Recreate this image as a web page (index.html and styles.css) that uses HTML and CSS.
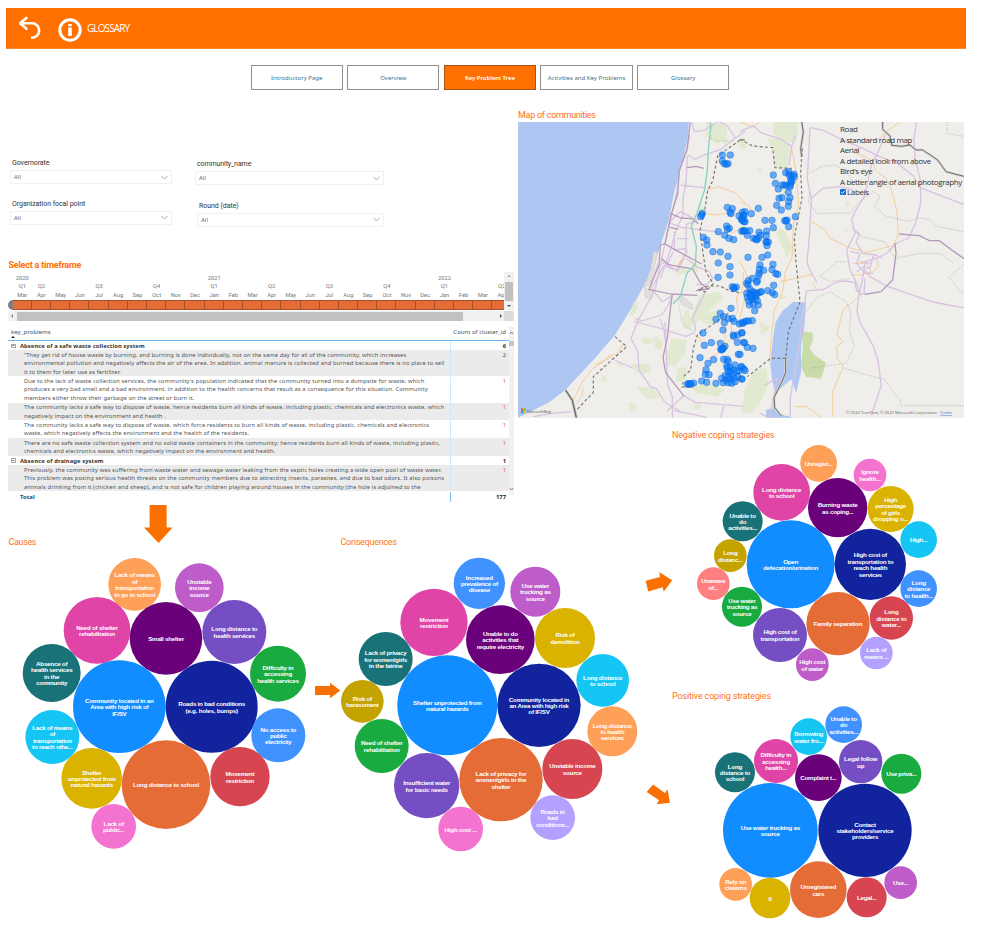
FILE: index.html
```html
<!DOCTYPE html>
<html lang="en">
<head>
<meta charset="utf-8">
<title>Key Problem Tree</title>
<link rel="stylesheet" href="styles.css">
</head>
<body>
<header class="topbar">
  <svg class="back" viewBox="0 0 22 24" width="22" height="24"><path d="M8.2 1.2 1.2 7.3 8.2 13.4M1.5 7.3H13a6.7 6.7 0 0 1 0 14.4h-1" fill="none" stroke="#fff" stroke-width="2.6"/></svg>
  <svg class="info" viewBox="0 0 24 24" width="24" height="24"><circle cx="12" cy="12" r="10.200" fill="none" stroke="#fff" stroke-width="3"/><path d="M10.200 6h3.600v2.300h-3.600zM10.200 9.500h3.600V18h-3.600z" fill="#fff"/></svg>
  <span class="topbar-title">GLOSSARY</span>
</header>
<nav class="tabs">
  <a class="tab">Introductory Page</a>
  <a class="tab">Overview</a>
  <a class="tab active">Key Problem Tree</a>
  <a class="tab">Activities and Key Problems</a>
  <a class="tab">Glossary</a>
</nav>
<main class="board">
  <section class="problems">
    <div class="filters">
      <div class="filter"><label>Governorate</label><div class="select">All<svg viewBox="0 0 7 5" width="7" height="5"><path d="M.5.8 3.500 4 6.500.8"/></svg></div></div>
      <div class="filter f2"><label>community_name</label><div class="select">All<svg viewBox="0 0 7 5" width="7" height="5"><path d="M.5.8 3.500 4 6.500.8"/></svg></div></div>
      <div class="filter"><label>Organization focal point</label><div class="select">All<svg viewBox="0 0 7 5" width="7" height="5"><path d="M.5.8 3.500 4 6.500.8"/></svg></div></div>
      <div class="filter f4"><label>Round (date)</label><div class="select">All<svg viewBox="0 0 7 5" width="7" height="5"><path d="M.5.8 3.500 4 6.500.8"/></svg></div></div>
    </div>
    <h2 class="title strong">Select a timeframe</h2>
    <div class="timeline">
      <div class="tl-view">
        <div class="tl-row" id="years"></div>
        <div class="tl-row" id="quarters"></div>
        <div class="tl-row" id="months"></div>
        <div class="tl-bar"><i class="handle"></i><div class="cells" id="cells"></div></div>
      </div>
      <div class="vscroll"><i class="up"></i><b></b><i class="down"></i></div>
      <div class="hscroll"><i class="left"></i><b></b><i class="right"></i></div>
      <div class="corner"></div>
    </div>
    <div class="table">
      <div class="grid-body">
        <div class="row head"><span>key_problems<i class="sort"></i></span><em>Count of cluster_id</em></div>
        <div class="row group"><span><i class="box"></i>Absence of a safe waste collection system</span><em>6</em></div>
        <div class="row odd h3"><span>“They get rid of house waste by burning, and burning is done individually, not on the same day for all of the community, which increases<br>environmental pollution and negatively affects the air of the area. In addition, animal manure is collected and burned because there is no place to sell<br>it to them for later use as fertilizer.</span><em>2</em></div>
        <div class="row h3"><span>Due to the lack of waste collection services, the community's population indicated that the community turned into a dumpsite for waste, which<br>produces a very bad smell and a bad environment, in addition to the health concerns that result as a consequence for this situation. Community<br>members either throw their garbage on the street or burn it.</span><em class="o">1</em></div>
        <div class="row odd h2"><span>The community lacks a safe way to dispose of waste, hence residents burn all kinds of waste, including plastic, chemicals and electronics waste, which<br>negatively impact on the environment and health .</span><em class="o">1</em></div>
        <div class="row h2 tall"><span>The community lacks a safe way to dispose of waste, which force residents to burn all kinds of waste, including plastic, chemicals and electronics<br>waste, which negatively affects the environment and the health of the residents.</span><em class="o">1</em></div>
        <div class="row odd h2"><span>There are no safe waste collection system and no solid waste containers in the community; hence residents burn all kinds of waste, including plastic,<br>chemicals and electronics waste, which negatively impact on the environment and health.</span><em class="o">1</em></div>
        <div class="row group"><span><i class="box"></i>Absence of drainage system</span><em>1</em></div>
        <div class="row odd h3"><span>Previously, the community was suffering from waste water and sewage water leaking from the septic holes creating a wide open pool of waste water.<br>This problem was posing serious health threats on the community members due to attracting insects, parasites, and due to bad odors. It also poisons<br>animals drinking from it (chicken and sheep), and is not safe for children playing around houses in the community (the hole is adjoined to the</span><em class="o">1</em></div>
        <div class="row total"><span>Total</span><em>177</em></div>
      </div>
      <div class="tscroll"><svg viewBox="0 0 5 4" width="5" height="4"><path d="M.8 3 2.500 1 4.200 3"/></svg><b></b><svg class="dn" viewBox="0 0 5 4" width="5" height="4"><path d="M.8 1 2.500 3 4.200 1"/></svg></div>
    </div>
  </section>

  <section class="communities">
    <h2 class="title">Map of communities</h2>
    <div class="map">
      <svg viewBox="518 122 446 296" width="446" height="296">
        <rect x="518" y="122" width="446" height="296" fill="#efeeea"/>
        <g transform="translate(515 105) scale(.33333)">
          <path fill="#adc6f2" d="M9 51H522L518 100 500 180 478 260 460 350 440 410 420 470 385 545 355 600 300 690 235 765 150 856 100 893 9 938Z"/>
          <g fill="#dbe8c4" opacity=".7">
            <path d="M575 51l55 8 8 30-30 32-35-28zM660 115l30-12v25zM620 90l20 15-12 18zM500 230l20 10-8 14zM553 300l14 10-8 22-12-4zM355 590l15 5-8 28-20 12zM555 570l60-10 10 20-35 32-50 45-10-25zM630 640l-50 20-35-20 60-24zM500 640l15-30 20 40-8 25-22-5zM470 700l45 5-5 40-30 40-30-8 8-40zM490 790l25-5-4 40-30 5zM520 842l70-6 40 20-25 20-60-12zM340 780l60-5 10 25-30 10zM365 845l50 5 20 30-40 2zM260 810l18 12-15 8zM340 890l25 10-6 18-15-2zM540 895l20 2-8 20-14-4zM475 495l30-10 20 12-30 14zM525 470l20 5 6 25-16 5zM420 690l24 20-5 24-20-7zM380 700l40-2-4 15-30 6zM300 772l30 3-14 12z"/>
          </g>
          <g fill="#e0dfdb" stroke="#c8c7c3" stroke-width="1.500"><path d="M428 440l-12 55 -12 42-18 12 20-54 10-54zM390 550l25 10-5 24-20-9zM497 570l35 28v15l-30-13-10-18z"/></g>
          <g fill="none" stroke="#d9c2e2" stroke-width="3.800" stroke-linejoin="round">
            <path d="M530 52l8 28 30-4 38-24M524 90l-8 48-22 50-8 70-14 65-24 100-8 42-20 90-50 90-22 55 20 40 4 55 34 50 18 6 25 40 50 30"/>
            <path d="M517 153l-4 80-8 40-2 60-18 38-14 50-35 100M519 150l20 13 32-14 45-15 45-35-25-38-24-10M661 99l30-20M497 241l70 7M466 348l30-28 52 26-34 12-2 90-24 50-34-13 20-45M460 352l40 15 120 16M478 380v55l38-5M486 401h34M438 470l45 25 35-60M405 545l25-70M410 550l40-75M515 460l30 25 38 15 10 20-20 20-30-2M360 640l20 8 60-18 20-30 10-28-28 18-32-38M357 649l75 20 80 25 25-10 5-15-10-30 30-60 10-22M435 640l12 35 5 40M300 765l52 24M450 650l4 100 4 90 14 35 0 63M506 872l-50 47M506 872l35 20 145 12M627 900l-10 38M470 915l50 10 55 12M55 935l55-10 60-5"/>
          </g>
          <g fill="none" stroke="#b599bd" stroke-width="3.800" stroke-linejoin="round">
            <path d="M526 52l-10 80-23 65-5 70-20 62-18 87-14 4-4 60-30 73 65 14 80 4M516 188l28-4 22 6M466 325l32 14 32 2 20 15M464 367l26 6M450 417l35 20 75 40M438 460l25 20 70 12 22 40 22 20-35 5M472 568l-8 60-6 65-14 65 8 45 54 69"/>
          </g>
          <path d="M585 52l3 12-8 70-3 60-8 60-23 70-17 40 15 60-3 55-25 25-20 70-22 22" fill="none" stroke="#86d2c2" stroke-width="4"/>
          <g fill="none" stroke="#f4c88b" stroke-width="2.600"><path d="M575 255l35-10 50 18 30 30M570 325l30 5 30-4M508 460l-18 22 8-18M325 715l-20 35-20 0-20 20-32 20-30 40-28 55M290 755l-50 25M205 850l-5 25-15 20M686 500l-4 55-18 20 5 40-20 40 2 40-35 45-35 20M540 690l16 10 1 12M686 325l-28-2M650 385l40-20M630 660l0 80M690 580l-16 60"/></g>
          <g fill="none" stroke="#777673" stroke-width="3.500" stroke-dasharray="9 7"><path d="M690 105l-12-2-70 50-15 75-15 28-8 55-15 65 10 75 8 50 22 35-25 25-20-8 30-10 35 0 30 15 35 6M640 625l-28 20-65 45-12 40-8 65-22 20M505 830l-4 16 30-1M300 695l35 30-100 90 0 47-50 53"/></g>
          <path d="M583 98l25 10 50 0M490 590l10 60 35 30" fill="none" stroke="#9a9996" stroke-width="1.500" stroke-dasharray="3 3"/>
          <path d="M152 856l20 30 12 52" fill="none" stroke="#bcbbb8" stroke-width="8"/><path d="M152 856l20 30 12 52" fill="none" stroke="#444" stroke-width="2.500"/>
        </g>
        <g transform="translate(740 105) scale(.33333)">
          <g fill="#dbe8c4" opacity=".7"><path d="M100 51l75 0-6 60-35 0-35-25zM80 100l60 8 10 20-10 65-40-5 3-50zM110 225l40 12-6 30-20-5zM50 185l20 12-10 4zM100 370l30 4 30 50-20 35-22-55zM120 570l20 5-12 10zM60 650l34 18-30 22zM40 800l40-12 5 52-25 55-30 30-25 0 10-70zM0 120l20 6-20 8zM315 285l15 10-10 10zM313 370l15 8-10 8z"/></g>
          <path fill="#c9dca8" d="M186 678l32 5v25l-10 22 15 20 35 24-15 48-20-4-25-2-15-30 5-55z"/>
          <path fill="#adc6f2" d="M160 590l38 3-5 70-10 55 0 85-15 60-14-40-18 15-30 25-9-35-6-50 5-55 10-70 22-36zM78 915l30-8 25 22 28 9H78z"/>
          <path d="M160 835l-20 25-15 15-20 42 30 15 35-2-8-45z" fill="#efeeea"/>
          <g fill="none" stroke="#f4c88b" stroke-width="2.600">
            <path d="M0 290l30 15 0 10M60 51l-20 15-40-15M168 200l8 100-15 50-5 110-20 40-8 60-25 55-10 90-5 70M155 130l15 80M120 530l100-22M135 385l20-20M215 350l40 25 15 25 60 28 50 14 80-20 15-35-4-70-15-55-15-40-35-25-8-30-55-25M480 51l-50 35-20 25M340 475l40 0 15 25-30 10-30 0M410 460l5 25-15 15M365 568l-55 45-20 75 20 22-20 15 2 35 18 25-32 75 0 76M165 905l35 0 45 33M220 535l10 20M0 470l30 60-10 60"/>
          </g>
          <g fill="none" stroke="#d9c2e2" stroke-width="4" stroke-linejoin="round">
            <path d="M40 62l25 22 55 18 35 22 12-35M0 80l40-18M155 125l-8 55M210 68l40 8 50 25 75 32 50 25 45 15 50 40 20 35 131 50M530 51l-8 50 3 60 15 60 3 70-15 60-22 48-35 15-30 30-30 15-35 10-10 60-10 45-5 42 8 35 40 70 15 45 10 75-30 90M440 80l-30 70-15 25-20 95-30 50-10 25 10 40-25 50 10 60 20 40 10 35M210 68l-5 95-3 60 12 60-5 100-8 90 10 25 20 35M214 280l35-30 50-5 40 10M370 568l-20-10-5-25-30-5-25 3-40 22-50 5-15 80-5 60-10 70-14 80-5 35 0 50M370 490l20 25 50 28 80 28 60 20 60 12 31 5M375 520l-3 45M338 370l20 20-10 20 20 35 40 5 20 10M350 500l20-15 20 5 10-40M330 440l30 5-10 30 25 30 25 0M360 470l35 5M75 840l35-20-20 120-30-15"/>
          </g>
          <g fill="none" stroke="#b599bd" stroke-width="4"><path d="M478 387l60 5 30 15 30 0 40 30 34 24M465 415l3 30-10 80-35 35-50 8"/></g>
          <g fill="none" stroke="#aaa9a6" stroke-width="2" stroke-dasharray="4 4"><path d="M208 205l35-20 40-5 40 20 15 30M210 260l-5 30 25 35 100-1 25-30 45-35 20 15-18 30 38 30 65 15 35-10 30 5 20 20 75 15 31 0M350 375l15 20 70 15 30 50 75-15 60 0 40 30M672 480l-46 36 46 54M320 470l-30 0-50 45 30 15 60-10M198 620l30-40 40-20 50 30 15 35-5 50 15 50-25 50-110 15M315 790l50 15 70 20 45 60 5 17 187 0M622 51v35l50 8"/></g>
          <path d="M428 51v22l22 20 5 28 30 3 25-4 18 15 20 0 45 30 25 35 30 8 24 6M185 51l5 30-8 50 3 25M137 758l0 45-10 25-25 50 2 30 20 25" fill="none" stroke="#d6d5d2" stroke-width="8"/>
          <path d="M428 51v22l22 20 5 28 30 3 25-4 18 15 20 0 45 30 25 35 30 8 24 6M185 51l5 30-8 50 3 25M137 758l0 45-10 25-25 50 2 30 20 25" fill="none" stroke="#555" stroke-width="2.500"/>
          <path d="M0 103l38 20 60 5 7 60 50 2M187 130l-5 70 4 80-18 90-5 30 5 70 12 120-35 90-8 80-45 0-70 55" fill="none" stroke="#777673" stroke-width="3.500" stroke-dasharray="9 7"/>
        </g>
        <g id="dots"></g>
        <g class="bing"><path fill="#f25022" d="M521 408.500h2.200v2.200H521z"/><path fill="#7fba00" d="M523.500 408.500h2.200v2.200h-2.200z"/><path fill="#00a4ef" d="M521 411h2.200v2.200H521z"/><path fill="#ffb900" d="M523.500 411h2.200v2.200h-2.200z"/><text x="527" y="412.500" textLength="24">Microsoft Bing</text><text x="846" y="414" textLength="91">© 2022 TomTom, © 2022 Microsoft Corporation</text><text class="terms" x="940" y="414" textLength="12">Terms</text></g>
      </svg>
      <div class="map-types">
        <p>Road</p><p>A standard road map</p><p>Aerial</p><p>A detailed look from above</p><p>Bird's eye</p><p>A better angle of aerial photography</p>
        <p class="labels"><svg viewBox="0 0 6 6" width="6" height="6"><rect width="6" height="6" rx="1" fill="#0b6fe0"/><path d="M1.200 3.100 2.500 4.400 4.900 1.600" fill="none" stroke="#fff"/></svg>Labels</p>
      </div>
    </div>
  </section>

  <section class="tree">
    <svg viewBox="0 503 672 433" width="672" height="433">
      <g fill="#fa7000"><path d="M149.600 505h17v22.500h6L158.500 543 144 527.500h5.600z"/><path d="M315 686h15v-3.300l10.300 7.800L330 698.300V695H315z"/><path d="M645.700 580.700 660 577l-.8-5 13 8.300-8.500 11.500-1-4.500-14.500 4.200z"/><path d="M653 784.500l12 8.600 2.500-3.900 2.500 13.500-13.300 1.500 2.300-4-12.300-8.200z"/></g>
      <text class="svg-title" x="8.500" y="545" textLength="28">Causes</text>
      <text class="svg-title" x="340.500" y="545" textLength="56.500">Consequences</text>
      <g id="causes"></g><g id="consequences"></g>
    </svg>
  </section>
  <section class="negative">
    <h2 class="title">Negative coping strategies</h2>
    <svg viewBox="672 441 292 249" width="292" height="249"><g id="negative"></g></svg>
  </section>
  <section class="positive">
    <h2 class="title">Positive coping strategies</h2>
    <svg viewBox="672 702 292 234" width="292" height="234"><g id="positive"></g></svg>
  </section>
</main>
<script src="charts.js"></script>
</body>
</html>
```
FILE: styles.css
```css
* { box-sizing: border-box; }
body { margin: 0; width: 983px; height: 936px; overflow: hidden; background: #fff; font-family: "Open Sans", "Noto Sans", sans-serif; }
svg { display: block; }

.topbar { display: flex; align-items: center; height: 41px; margin: 8px 17px 0 6px; padding-left: 13px; background: #ff7000; border-bottom: 1px solid #ff8a2e; }
.back { margin-top: -1px; }
.info { margin-left: 17px; margin-top: 3px; }
.topbar-title { margin-left: 5px; color: #fff; font-size: 10px; letter-spacing: -.9px; transform-origin: left; }

.tabs { display: flex; gap: 4.300px; margin: 16px 0 0 250.600px; height: 43px; }
.tab { width: 92.300px; height: 25px; border: 1px solid #909090; display: flex; align-items: center; justify-content: center; font: 6px "Noto Sans", sans-serif; letter-spacing: .02px; color: #3f7288; white-space: nowrap; }
.tab.active { background: #ff7000; color: #fff; border-color: #a85216; font-weight: 600; letter-spacing: -.05px; }

.board { display: grid; grid-template-columns: 518px 154px 1fr; grid-template-rows: 320px 75px 187px 246px; }
.problems { grid-area: 1 / 1 / 3 / 2; padding-left: 8px; }
.communities { grid-area: 1 / 2 / 2 / 4; }
.tree { grid-area: 3 / 1 / 5 / 3; z-index: 1; }
.negative { grid-area: 2 / 3 / 4 / 4; }
.positive { grid-area: 4 / 3 / 5 / 4; }

.title { margin: 0; height: 14px; font: 9px/14px Roboto, sans-serif; letter-spacing: -.16px; color: #ff7223; white-space: nowrap; }
.communities .title { letter-spacing: -.31px; word-spacing: .2px; }
.negative .title { height: 13px; }
.positive .title { height: 12px; line-height: 12px; }
.title.strong { font-weight: 700; color: #ff7000; height: 15px; letter-spacing: -.22px; padding-left: .5px; }

.filters { display: grid; grid-template-columns: 185px 190px; grid-template-rows: 40.500px 1fr; height: 150px; padding: 50px 0 0 2px; }
.filter { width: 162px; }
.filter label { display: block; height: 12px; padding-left: 2px; font: 7px/11px Roboto, sans-serif; color: #333; letter-spacing: -.05px; }
.f2, .f4 { width: 189px; padding-top: 1px; }
.f2 label { letter-spacing: -.1px; }
.f4 { padding: 2px 0 0 2px; }
.select { display: flex; align-items: center; justify-content: space-between; height: 14px; padding: 0 3px; border: 1px solid #f0f0f0; font: 6px "Noto Sans", sans-serif; color: #666; }
.select svg path { fill: none; stroke: #999; stroke-width: .8; }

.timeline { display: grid; grid-template-columns: 496px 10px; grid-template-rows: 39px 10px; height: 49px; margin-top: -1px; }
.tl-view { overflow: hidden; }
.tl-row { display: flex; height: 8.500px; width: 520px; padding-left: 4.700px; }
.tl-row span { flex: 0 0 19.200px; text-align: center; font: 5.800px/9px Roboto, sans-serif; color: #777; white-space: nowrap; display: flex; justify-content: center; }
.tl-row:first-child { margin-top: 1.500px; }
.tl-bar { display: flex; width: 520px; margin-top: 1px; height: 10px; }
.handle { width: 4.700px; background: #7d7d7d; border-radius: 5px 0 0 5px; }
.cells { display: flex; }
.cells i { width: 19.200px; background: #e66c37; border: 1px solid #a9502b; border-width: 1px 1px 1px 0; }
.vscroll, .hscroll { background: #f1f1f1; display: flex; align-items: center; }
.vscroll { flex-direction: column; justify-content: space-between; height: 38px; }
.vscroll b { width: 8px; height: 19px; background: #c1c1c1; }
.hscroll { justify-content: space-between; }
.hscroll b { width: 446px; height: 9px; background: #c1c1c1; margin-right: auto; margin-left: 4px; }
.corner { background: #dcdcdc; }
.up, .down, .left, .right { border: 2.500px solid transparent; }
.up { border-bottom-color: #a3a3a3; margin-top: 1px; }
.down { border-top-color: #505050; margin-bottom: 1px; }
.left { border-right-color: #888; margin-left: 1px; }
.right { border-left-color: #505050; }

.table { display: flex; margin-top: 6px; height: 174px; color: #555; font: 5.800px/8.500px "Noto Sans", sans-serif; }
.grid-body { width: 501px; }
.row { display: grid; grid-template-columns: 442px 59px; }
.row span { position: relative; padding-left: 16px; white-space: nowrap; letter-spacing: .09px; }
.row em { font-style: normal; text-align: right; padding-right: 3px; border-left: 1px solid #d4e8fa; white-space: nowrap; }
.row em.o { color: #d0683a; }
.head { height: 14px; border-bottom: 1px solid #6cb5f0; line-height: 9px; font-size: 6.100px; }
.row.head span { padding-left: 3px; color: #456; letter-spacing: 0; }
.row.head em { border: 0; color: #456; margin-left: -10px; letter-spacing: -.05px; }
.sort { position: absolute; left: 3px; top: 7px; border: 2.500px solid transparent; border-bottom-color: #222; }
.group { height: 9.200px; font-weight: 700; color: #333; line-height: 10px; }
.row.group span { padding-left: 12px; }
.box { position: absolute; left: 3px; top: 2.500px; width: 4.500px; height: 4.500px; border: .8px solid #aaa; background: linear-gradient(#888, #888) center / 2.500px 1px no-repeat; }
.odd { background: #ebebeb; }
.h3 { height: 26.300px; padding-top: .5px; }
.h2 { height: 17.300px; padding-top: .3px; }
.h2.tall { height: 18.300px; padding-top: .8px; }
.h2.tall + .h2 { height: 17.600px; }
.row.total { height: 9px; font-weight: 700; color: #222; line-height: 10px; margin-top: 1px; }
.row.total span { padding-left: 12px; color: #1c4560; }
.row.total em { border-color: #7fbdf0; }
.tscroll { width: 5px; background: #f1f1f1; height: 168px; display: flex; flex-direction: column; padding-top: 4px; }
.tscroll b { height: 5px; margin-top: 6px; background: #c4c4c4; }
.tscroll .dn { margin: auto 0 4px; }
.tscroll path { fill: none; stroke: #666; stroke-width: .8; }

.map { position: relative; width: 446px; height: 296px; overflow: hidden; }
.map-types { position: absolute; left: 322px; top: 2px; font: 8px/10.500px "Open Sans", sans-serif; color: #333; white-space: nowrap; letter-spacing: -.36px; }
.map-types p { margin: 0; }
.labels { display: flex; align-items: center; gap: 1px; }
.dot { fill: #0078ff; fill-opacity: .58; stroke: #0a58c8; stroke-opacity: .7; stroke-width: 1.500; }
.bing text { font: 4.300px "Open Sans", sans-serif; fill: #666; }
.bing .terms { fill: #3b6fd4; text-decoration: underline; }

.svg-title { font: 9px Roboto, sans-serif; fill: #ff7223; }
.bubble-label { font: 700 18.800px "Liberation Sans", Arial, sans-serif; letter-spacing: -.75px; fill: #fff; text-anchor: middle; }
```
FILE: charts.js
```js
const NS = 'http://www.w3.org/2000/svg';
function add(parent, tag, attrs, text) {
  const el = document.createElementNS(NS, tag);
  for (const k in attrs) el.setAttribute(k, attrs[k]);
  if (text) el.textContent = text;
  parent.appendChild(el);
  return el;
}

// Bubble rows: centre x, centre y, radius, colour, label lines separated by "|"
function bubbles(id, ox, oy, rows) {
  const g = document.getElementById(id);
  g.setAttribute('transform', `translate(${ox} ${oy}) scale(.33333)`);
  rows.forEach(([x, y, r, color, label]) => {
    add(g, 'circle', { cx: x, cy: y, r, fill: color });
    const lines = label.split('|');
    lines.forEach((line, i) => add(g, 'text', { class: 'bubble-label', x, y: y + 8 + (i - (lines.length - 1) / 2) * 19.2 }, line));
  });
}

bubbles('causes', 0, 500, [
  [404, 253, 79, '#ffa058', 'Lack of means|of|transportation|to go to school'],
  [598, 263, 73, '#be5dc9', 'Unstable|income|source'],
  [291, 391, 100, '#e044a7', 'Need of shelter|rehabilitation'],
  [498, 415, 109, '#6b007b', 'Small shelter'],
  [703, 396, 96, '#744ec2', 'Long distance to|health services'],
  [155, 519, 87, '#197278', 'Absence of|health services|in the|community'],
  [834, 521, 84, '#1aab40', 'Difficulty in|accessing|health services'],
  [358, 620, 139, '#118dff', 'Community located in an|Area with high risk of|IF/SV'],
  [635, 620, 138, '#12239e', 'Roads in bad conditions|(e.g. holes, bumps)'],
  [157, 711, 81, '#15c6f4', 'Lack of means|of|transportation|to reach othe...'],
  [835, 706, 81, '#4092ff', 'No access to|public|electricity'],
  [275, 835, 91, '#d9b300', 'Shelter|unprotected from|natural hazards'],
  [498, 854, 133, '#e66c37', 'Long distance to school'],
  [720, 830, 89, '#d64550', 'Movement|restriction'],
  [341, 979, 67, '#f472d0', 'Lack of|public...']
]);
bubbles('consequences', 310, 530, [
  [508, 160, 77, '#4092ff', 'Increased|prevalence of|disease'],
  [676, 185, 75, '#be5dc9', 'Use water|trucking as|source'],
  [372, 277, 101, '#e044a7', 'Movement|restriction'],
  [571, 329, 103, '#6b007b', 'Unable to do|activities that|require electricity'],
  [765, 324, 90, '#d9b300', 'Risk of|demolition'],
  [227, 387, 81, '#197278', 'Lack of privacy|for women/girls|in the latrine'],
  [157, 514, 64, '#c4a200', 'Risk of|harassment'],
  [412, 526, 150, '#118dff', 'Shelter unprotected from|natural hazards'],
  [687, 526, 125, '#12239e', 'Community located in|an Area with high risk|of IF/SV'],
  [878, 451, 79, '#15c6f4', 'Long distance|to school'],
  [907, 604, 75, '#ffa058', 'Long distance|to health|services'],
  [215, 648, 81, '#1aab40', 'Need of shelter|rehabilitation'],
  [350, 767, 98, '#744ec2', 'Insufficient water|for basic needs'],
  [573, 749, 125, '#e66c37', 'Lack of privacy for|women/girls in the|shelter'],
  [787, 717, 90, '#d64550', 'Unstable income|source'],
  [452, 897, 67, '#f472d0', 'High cost ...'],
  [728, 863, 67, '#b3a0ff', 'Roads in|bad|conditions...']
]);
bubbles('negative', 665, 425, [
  [461, 115, 55, '#ffa058', 'Unregist...'],
  [615, 150, 49, '#f472d0', 'Ignore|health...'],
  [350, 202, 85, '#e044a7', 'Long distance|to school'],
  [518, 248, 89, '#6b007b', 'Burning waste|as coping...'],
  [677, 252, 69, '#d9b300', 'High|percentage|of girls|dropping o...'],
  [233, 289, 60, '#197278', 'Unable to|do|activities...'],
  [761, 344, 55, '#15c6f4', 'High...'],
  [196, 392, 49, '#c4a200', 'Long|distanc...'],
  [377, 418, 132, '#118dff', 'Open|defecation/urination'],
  [616, 418, 107, '#12239e', 'High cost of|transportation to|reach health|services'],
  [145, 476, 49, '#ff8080', 'Unaware|of...'],
  [761, 491, 55, '#4092ff', 'Long|distance|to health...'],
  [231, 545, 60, '#1aab40', 'Use water|trucking as|source'],
  [519, 596, 95, '#e66c37', 'Family separation'],
  [679, 579, 65, '#d64550', 'Long|distance to|water...'],
  [345, 630, 81, '#744ec2', 'High cost of|transportation'],
  [634, 684, 49, '#b3a0ff', 'Lack of|means ...'],
  [442, 719, 49, '#be5dc9', 'High cost|of water']
]);
bubbles('positive', 665, 685, [
  [536, 119, 55, '#4092ff', 'Unable to|do|activities...'],
  [431, 155, 55, '#15c6f4', 'Borrowing|water fro...'],
  [333, 228, 66, '#e044a7', 'Difficulty in|accessing|health...'],
  [587, 230, 65, '#744ec2', 'Legal follow|up'],
  [210, 262, 60, '#197278', 'Long|distance to|school'],
  [709, 266, 60, '#1aab40', 'Use priva...'],
  [460, 278, 70, '#6b007b', 'Complaint t...'],
  [316, 436, 142, '#118dff', 'Use water trucking as|source'],
  [600, 436, 140, '#12239e', 'Contact|stakeholders/service|providers'],
  [212, 598, 49, '#ffa058', 'Rely on|cisterns'],
  [315, 639, 61, '#d9b300', '0'],
  [460, 614, 85, '#e66c37', 'Unregistered|cars'],
  [605, 637, 60, '#d64550', 'Legal...'],
  [707, 593, 49, '#be5dc9', 'Use...']
]);

// Community markers, one group for each map tile
const west = '622,150 646,150 622,168 628,176 639,176 634,178 562,325 560,330 557,335 637,307 652,311 645,322 648,326 672,333 682,322 686,332 680,345 687,350 635,363 643,370 637,373 610,380 629,391 680,379 686,377 642,400 656,404 565,397 575,405 576,420 594,440 616,441 639,454 610,474 645,485 645,510 609,517 652,545 658,550 664,546 656,549 648,610 616,625 603,643 625,635 640,641 628,653 652,640 657,649 673,657 684,655 624,675 564,684 656,694 668,690 681,684 568,721 589,713 616,715 630,724 625,730 620,735 617,733 622,732 686,712 670,748 555,758 596,764 579,775 626,763 637,763 640,770 573,794 571,808 582,809 660,780 680,786 635,782 645,788 655,795 640,800 630,812 650,810 665,800 672,797 620,820 632,826 645,822 658,820 668,815 680,822 640,833 650,835 660,830 625,833 603,835 560,828 575,832 536,834 518,838 525,836 520,836 528,838 648,800 640,815 637,790';
const east = '100,210 106,235 137,203 146,200 148,210 155,212 162,208 152,222 156,228 163,215 115,252 127,240 134,240 140,241 151,240 153,232 150,245 145,262 150,278 126,278 117,280 146,290 110,301 145,304 124,315 55,310 15,320 34,326 12,330 5,340 15,350 8,345 166,335 134,347 141,345 138,348 75,346 96,346 100,368 146,365 10,378 18,378 29,377 22,391 80,378 57,382 62,390 79,392 55,400 40,400 47,402 50,405 78,410 85,411 80,412 81,422 24,457 83,450 66,457 60,480 99,478 58,492 71,496 96,494 57,505 56,512 107,506 113,508 37,520 52,528 50,532 20,535 25,527 24,540 101,541 83,557 97,563 104,569 30,553 20,565 30,565 38,560 45,563 52,565 60,562 64,560 22,577 33,577 37,583 45,580 52,587 28,600 40,597 55,600 44,617 5,653 14,650 20,648 26,648 37,647 5,683 14,714 22,727 39,730 0,748 4,785 12,792 15,797 6,822 -20,690 -8,712 48,572 36,572 26,588';
[[west, 515], [east, 740]].forEach(([pts, ox]) => {
  const g = add(document.getElementById('dots'), 'g', { transform: `translate(${ox} 105) scale(.33333)` });
  pts.split(' ').forEach(p => {
    const [cx, cy] = p.split(',');
    add(g, 'circle', { class: 'dot', cx, cy, r: 10 });
  });
});

// Timeline scale, March 2020 to April 2022
const names = ['Jan', 'Feb', 'Mar', 'Apr', 'May', 'Jun', 'Jul', 'Aug', 'Sep', 'Oct', 'Nov', 'Dec'];
let years = '', quarters = '', months = '', cells = '';
for (let i = 0; i < 26; i++) {
  const m = (i + 2) % 12, y = 2020 + Math.floor((i + 2) / 12);
  years += `<span>${i === 0 || m === 0 ? y : ''}</span>`;
  quarters += `<span>${i === 0 || m % 3 === 0 ? 'Q' + (Math.floor(m / 3) + 1) : ''}</span>`;
  months += `<span>${names[m]}</span>`;
  cells += '<i></i>';
}
document.getElementById('years').innerHTML = years;
document.getElementById('quarters').innerHTML = quarters;
document.getElementById('months').innerHTML = months;
document.getElementById('cells').innerHTML = cells;
```
